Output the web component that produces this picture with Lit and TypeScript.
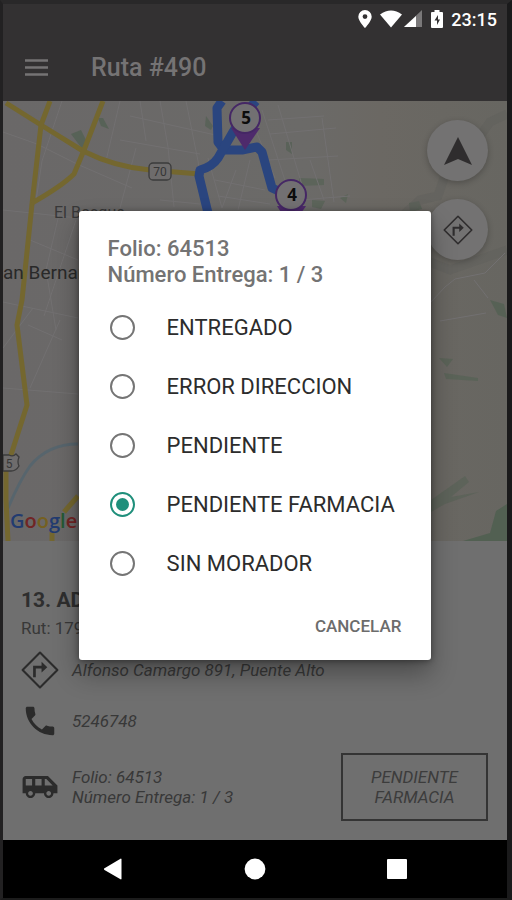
import { LitElement, html, css, svg } from "lit";
import { customElement, state } from "lit/decorators.js";

const turnIcon = svg`
  <path d="M12 1 23 12 12 23 1 12z" fill="none" stroke="currentColor" stroke-width="1.3" stroke-linejoin="round"/>
  <path d="M8.500 16.600V10.200H14" fill="none" stroke="currentColor" stroke-width="1.7"/>
  <path d="M13 6.800 16.600 10.200 13 13.600z" fill="currentColor"/>`;

@customElement("route-map")
class RouteMap extends LitElement {
  static styles = css`
    :host { display: block; position: relative; overflow: hidden; background: #6a6868; }
    .canvas { position: absolute; inset: 0; width: 100%; height: 100%; display: block; }
    text { font-family: Roboto, "Liberation Sans", sans-serif; }
    .place { font-size: 16px; fill: #383838; }
    .city { font-size: 19px; fill: #292929; }
    .shield { font-size: 12px; fill: #363636; text-anchor: middle; }
    .pin { font-size: 17px; font-weight: 700; fill: #0c0c0c; text-anchor: middle; font-family: "Open Sans", Roboto, sans-serif; }
    .google { font-size: 20px; font-weight: 600; font-family: "Open Sans", Roboto, sans-serif; }
    .actions { position: absolute; top: 19px; right: 19px; display: flex; flex-direction: column; gap: 18px; }
    .fab {
      width: 61px; height: 61px; border: 0; border-radius: 50%; padding: 0;
      background: #737272; color: #2f2d2e; display: grid; place-items: center;
      box-shadow: 0 2px 6px rgba(0, 0, 0, 0.24);
    }
    .fab svg { display: block; width: 30px; height: 30px; }
  `;

  render() {
    return html`
      <svg class="canvas" viewBox="3 101 504 440" preserveAspectRatio="xMidYMid slice" role="img" aria-label="Mapa de la ruta">
        <defs>
          <linearGradient id="land" x1="0" x2="1" y1="0" y2="0">
            <stop offset="0" stop-color="#6a6868"/>
            <stop offset="0.6" stop-color="#6b6a68"/>
            <stop offset="0.75" stop-color="#6b6863"/>
            <stop offset="1" stop-color="#676661"/>
          </linearGradient>
        </defs>
        <rect x="3" y="101" width="504" height="440" fill="url(#land)"/>
        <g fill="#526052">
          <path d="M71 134l10-4 6 12-4 8z" opacity=".8"/>
          <path d="M98 118l5 0 6 11-8-3z" opacity=".8"/>
          <path d="M206 116l7 10-2 4-6-4z" opacity=".7"/>
          <path d="M286 142l6 0 0 12-6-4z" opacity=".7"/>
          <path d="M299 178l25 1 0 6-25 1zM312 200l13 1-4 8-9-2zM340 198l8-4-2 9z" opacity=".6"/>
          <path d="M409 203l10-2 3 8-12 3z" opacity=".7"/>
          <path d="M490 300l14 4 3 14-9-3z" opacity=".8"/>
          <path d="M439 358l14 1-6 8zM444 373l34 5 0 3-32-2z" opacity=".6"/>
          <path d="M431 500l34-24 4 6-18 15 28-5-34 12-14 8z" opacity=".5"/>
          <path d="M463 541l27-8 6-22 11-7v37z"/>
        </g>
        <path d="M398 220l22-20 18-4 6-18M470 150l20-28 17-8M430 262l20 8 57-20" fill="none" stroke="#605f5b" stroke-width="9" opacity=".5"/>
        <g fill="none" stroke="#727071" stroke-width="1">
          <path d="M3 132l34 12 40 20 55 24M62 101l-20 60-6 40M120 101l-14 60M160 101l8 46 6 60M186 101l12 60 8 50M3 210l75 8M30 240l48 20M60 210l-14 60 10 60M76 220l-32 96M3 302l75 16M28 325l34 15M60 320l-30 68M3 348l30-40M3 388l75 6M120 140l80 14M130 116l90 20M148 170l48 4M160 200l40 4M120 208l16-60M140 101l6 40"/>
          <path d="M262 110l30 92M278 105l24 80M322 118l12 84M270 134l66-6M268 160l70-4M268 120l56-4M300 200l50-4M310 160l14 40M236 170l-14 38M215 180l50 10M218 196l52 8M250 160l-12 50M208 158l14 50M255 128l20 50"/>
          <path d="M431 302l14-15 10-8 30-6 20-20M474 280l14 18M440 321l46-8"/>
        </g>
        <path d="M8 508q12-28 22-42 18-22 48-22" fill="none" stroke="#52646f" stroke-width="3" opacity=".75"/>
        <g fill="none" stroke="#74672f" stroke-linejoin="round">
          <path d="M6 103 41 125 83 151Q115 167 150 170L200 174" stroke-width="5"/>
          <path d="M50 101 41 125 32 204 22 300 17 325 27 405 10 458M6 470V500L8 541" stroke-width="5"/>
          <path d="M103 101 84 150 74 174Q62 186 32 203" stroke-width="5"/>
          <path d="M52 541V532M64 512 78 496" stroke-width="5"/>
        </g>
        <text class="place" x="54" y="218">El Bosque</text>
        <text class="city" x="3" y="279">an Bernardo</text>
        <rect x="149" y="163" width="22" height="17" rx="4" fill="#6e6c6c" stroke="#3b3b3b" stroke-width="1.3"/>
        <text class="shield" x="160" y="176">70</text>
        <path d="M3 455h6q4 2 7-1l3 3q-2 5 0 9-3 5-8 5H3z" fill="#6e6c6c" stroke="#3b3b3b" stroke-width="1.3"/>
        <text class="shield" x="9" y="468">5</text>
        <g fill="none" stroke="#2a457f" stroke-linejoin="round" stroke-width="9">
          <path d="M222 101 217 108 218 142 224 150H242L257 147 262 152 272 188 283 193"/>
          <path d="M256 101 246 112 233 132 218 158Q212 167 200 170L199 176 208 213"/>
        </g>
        <g fill="#4e2a6c">
          <path d="M231 128h29l-15 22z"/>
          <path d="M277 206h29l-15 22z"/>
        </g>
        <g fill="#727072" stroke="#452765" stroke-width="2">
          <circle cx="245" cy="118" r="15"/>
          <circle cx="291" cy="195" r="15"/>
        </g>
        <text class="pin" x="246" y="124">5</text>
        <text class="pin" x="292" y="201">4</text>
        <text class="google" x="10" y="528"><tspan fill="#223b70">G</tspan><tspan fill="#702525">o</tspan><tspan fill="#756021">o</tspan><tspan fill="#223b70">g</tspan><tspan fill="#245a33">l</tspan><tspan fill="#702525">e</tspan></text>
      </svg>
      <div class="actions">
        <button class="fab" aria-label="Navegar">
          <svg viewBox="0 0 30 30"><path d="M15 1 29 29 15 23 1 29z" fill="currentColor"/></svg>
        </button>
        <button class="fab" aria-label="Indicaciones">
          <svg viewBox="0 0 24 24">${turnIcon}</svg>
        </button>
      </div>
    `;
  }
}

@customElement("status-dialog")
class StatusDialog extends LitElement {
  static styles = css`
    :host { display: block; }
    .dialog {
      box-sizing: border-box; background: #fff; border-radius: 3px; padding: 25px 22px 10px 29px;
      box-shadow: 0 14px 26px rgba(0, 0, 0, 0.32), 0 1px 6px rgba(0, 0, 0, 0.4);
    }
    .title { margin: 0 0 10px; font-size: 22px; line-height: 26px; font-weight: 500; color: #737373; }
    .options { border: 0; margin: 0; padding: 0; }
    .option { display: flex; align-items: center; gap: 32px; height: 59px; padding-left: 2px; font-size: 22px; color: #2c2c2c; white-space: nowrap; }
    .radio {
      appearance: none; flex: none; box-sizing: border-box; width: 25px; height: 25px; margin: 0;
      border: 2px solid #757575; border-radius: 50%; display: grid; place-items: center;
    }
    .radio:checked { border-color: #1f8f7b; }
    .radio:checked::before { content: ""; width: 13px; height: 13px; border-radius: 50%; background: #1f8f7b; }
    .footer { display: flex; justify-content: flex-end; margin-top: 9px; }
    .cancel { height: 48px; border: 0; padding: 0 8px; background: none; font: 500 17px Roboto, "Liberation Sans", sans-serif; color: #6c6c6c; }
  `;

  @state() selected = "PENDIENTE FARMACIA";

  options = ["ENTREGADO", "ERROR DIRECCION", "PENDIENTE", "PENDIENTE FARMACIA", "SIN MORADOR"];

  render() {
    return html`
      <section class="dialog" role="dialog" aria-labelledby="title">
        <h2 class="title" id="title">Folio: 64513<br>Número Entrega: 1 / 3</h2>
        <fieldset class="options" aria-labelledby="title">
          ${this.options.map((name) => html`
            <label class="option">
              <input class="radio" type="radio" name="status" .value=${name}
                .checked=${name === this.selected} @change=${() => (this.selected = name)}>
              <span>${name}</span>
            </label>`)}
        </fieldset>
        <div class="footer"><button class="cancel">CANCELAR</button></div>
      </section>
    `;
  }
}

@customElement("app-root")
class AppRoot extends LitElement {
  static styles = css`
    :host { display: block; font-family: Roboto, "Liberation Sans", sans-serif; }
    .frame {
      box-sizing: border-box; min-height: 100vh; position: relative; display: flex; flex-direction: column;
      border-style: solid; border-color: #292829 #1a1a1b #1c1c1c #222122; border-width: 4px 5px 2px 3px;
    }
    .top { background: #333132; }
    .status { display: flex; align-items: center; justify-content: flex-end; height: 30px; padding-right: 10px; color: #fff; font-size: 18px; font-weight: 500; }
    .status svg { display: block; height: 18px; fill: #fff; }
    .pin { width: 14px; margin-right: 8px; }
    .wifi { width: 22px; margin-right: 2px; }
    .signal { width: 18px; margin-right: 9px; }
    .battery { width: 12px; margin-right: 8px; }
    .bar { display: flex; align-items: center; gap: 43px; height: 67px; padding-left: 22px; color: #757374; }
    .menu { border: 0; background: none; padding: 0; width: 23px; height: 17px; color: inherit; }
    .menu svg { display: block; width: 23px; height: 17px; }
    .name { margin: 0; font-size: 25px; line-height: 30px; font-weight: 500; }
    .map { flex: 1; min-height: 300px; }
    .panel { background: #6f6f6f; color: #383838; padding: 45px 19px 19px 18px; }
    .client { margin: 0; font-size: 21px; line-height: 28px; font-weight: 700; color: #2e2e2e; }
    .rut { margin: 4px 0 13px; font-size: 17px; line-height: 20px; }
    .rows { display: flex; flex-direction: column; gap: 13px; }
    .row { display: flex; align-items: center; gap: 13px; font-size: 17px; line-height: 20px; font-style: italic; }
    .row svg { display: block; flex: none; width: 38px; height: 38px; color: #2b2b2b; fill: #2b2b2b; }
    .grow { flex: 1; }
    .state {
      box-sizing: border-box; width: 147px; height: 68px; border: 2px solid #343434; background: none; padding: 0;
      color: #3c3c3c; font: italic 400 17px/20px Roboto, "Liberation Sans", sans-serif;
    }
    .nav { display: grid; grid-template-columns: repeat(3, 142px); justify-content: center; height: 58px; background: #000; }
    .key { border: 0; background: none; padding: 0; display: grid; place-items: center; }
    .key svg { display: block; width: 22px; height: 22px; fill: #fff; }
    .overlay { position: absolute; inset: 27px 0 58px; display: flex; align-items: center; justify-content: center; }
    .choice { width: 70%; min-width: 340px; }
  `;

  render() {
    return html`
      <div class="frame">
        <header class="top">
          <div class="status">
            <svg class="pin" viewBox="0 0 14 18"><path fill-rule="evenodd" d="M7 0a6.700 6.700 0 0 0-6.700 6.700C.3 11 7 18 7 18s6.700-7 6.700-11.300A6.700 6.700 0 0 0 7 0zm0 4.200a2.400 2.400 0 1 1 0 4.800 2.400 2.400 0 0 1 0-4.800z"/></svg>
            <svg class="wifi" viewBox="0 0 22 18"><path d="M0 4.500Q11-3.500 22 4.500L11 17.500z"/></svg>
            <svg class="signal" viewBox="0 0 18 18"><path d="M18 0V17H0z" opacity=".35"/><path d="M12 6V17H0z"/></svg>
            <svg class="battery" viewBox="0 0 12 18"><path fill-rule="evenodd" d="M3.500 0h5v2H11a1 1 0 0 1 1 1v14a1 1 0 0 1-1 1H1a1 1 0 0 1-1-1V3a1 1 0 0 1 1-1h2.500zM7 5 3.500 10.500H6V15l3-5.500H7z"/></svg>
            <span>23:15</span>
          </div>
          <div class="bar">
            <button class="menu" aria-label="Menú">
              <svg viewBox="0 0 23 17"><path d="M0 1.500h23M0 8.500h23M0 15.500h23" stroke="currentColor" stroke-width="2.600"/></svg>
            </button>
            <h1 class="name">Ruta #490</h1>
          </div>
        </header>
        <route-map class="map"></route-map>
        <section class="panel">
          <h2 class="client">13. AD</h2>
          <p class="rut">Rut: 179</p>
          <div class="rows">
            <div class="row">
              <svg viewBox="0 0 24 24">${turnIcon}</svg>
              <span>Alfonso Camargo 891, Puente Alto</span>
            </div>
            <div class="row">
              <svg viewBox="0 0 24 24"><path d="M6.620 10.790c1.440 2.830 3.760 5.140 6.590 6.590l2.200-2.200c.27-.27.67-.36 1.020-.24 1.120.37 2.330.57 3.570.57.55 0 1 .45 1 1V20c0 .55-.45 1-1 1-9.390 0-17-7.610-17-17 0-.55.45-1 1-1h3.500c.55 0 1 .45 1 1 0 1.250.2 2.450.57 3.570.11.35.03.74-.25 1.020l-2.200 2.200z"/></svg>
              <span>5246748</span>
            </div>
            <div class="row">
              <svg viewBox="0 0 24 24"><path d="M17 5H3c-1.100 0-2 .89-2 2v9h2c0 1.650 1.340 3 3 3s3-1.350 3-3h5.500c0 1.650 1.340 3 3 3s3-1.350 3-3H23v-5l-6-6zM3 11V7h4v4H3zm3 6.500c-.83 0-1.500-.67-1.500-1.500s.67-1.500 1.500-1.500 1.500.67 1.500 1.500-.67 1.500-1.500 1.500zm7-6.500H9V7h4v4zm4.500 6.500c-.83 0-1.500-.67-1.500-1.500s.67-1.500 1.500-1.500 1.500.67 1.500 1.500-.67 1.500-1.500 1.500zM15 11V7h1l4 4h-5z"/></svg>
              <span class="grow">Folio: 64513<br>Número Entrega: 1 / 3</span>
              <button class="state">PENDIENTE<br>FARMACIA</button>
            </div>
          </div>
        </section>
        <nav class="nav">
          <button class="key" aria-label="Atrás"><svg viewBox="0 0 22 22"><path d="M19.500 1v20a.7.7 0 0 1-1 .3L2.500 12a1 1 0 0 1 0-1.800L18.500.8a.7.7 0 0 1 1 .2z"/></svg></button>
          <button class="key" aria-label="Inicio"><svg viewBox="0 0 22 22"><circle cx="11" cy="11" r="10.400"/></svg></button>
          <button class="key" aria-label="Recientes"><svg viewBox="0 0 22 22"><rect x="1" y="1" width="20" height="20" rx="1"/></svg></button>
        </nav>
        <div class="overlay"><status-dialog class="choice"></status-dialog></div>
      </div>
    `;
  }
}
